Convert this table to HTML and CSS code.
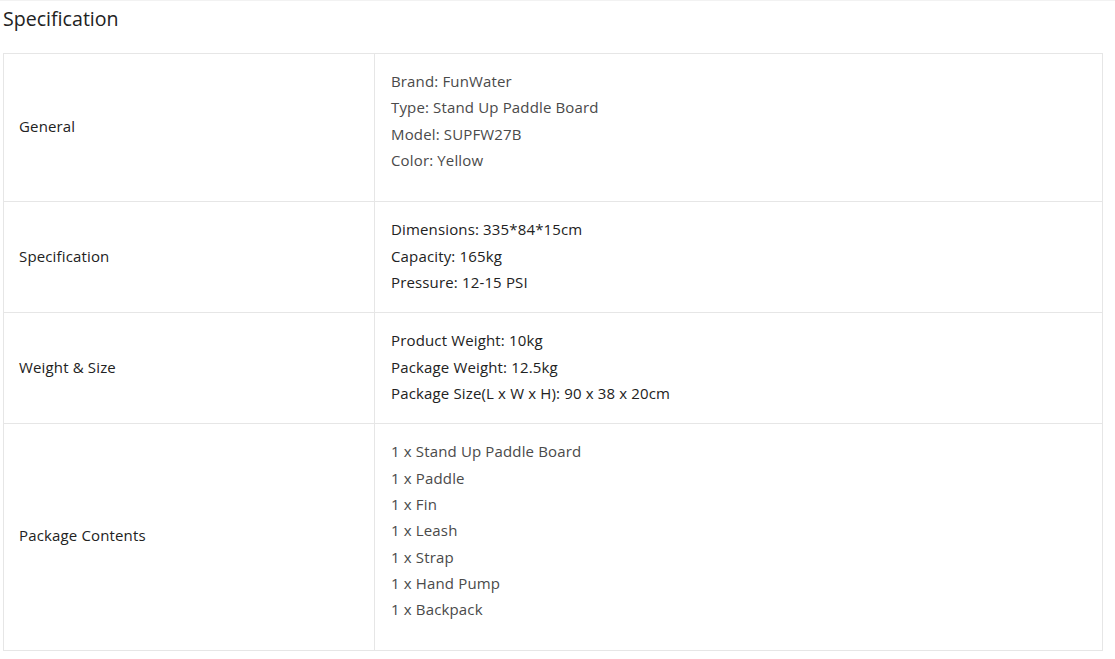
FILE: index.html
```html
<!DOCTYPE html>
<html>
<head>
<meta charset="utf-8">
<link rel="stylesheet" href="styles.css">
</head>
<body>
<h2 class="title">Specification</h2>
<table class="spec">
  <tr>
    <td class="label">General</td>
    <td class="value loose muted">Brand: FunWater<br>Type: Stand Up Paddle Board<br>Model: SUPFW27B<br>Color: Yellow</td>
  </tr>
  <tr>
    <td class="label">Specification</td>
    <td class="value">Dimensions: 335*84*15cm<br>Capacity: 165kg<br>Pressure: 12-15 PSI</td>
  </tr>
  <tr>
    <td class="label">Weight &amp; Size</td>
    <td class="value">Product Weight: 10kg<br>Package Weight: 12.5kg<br>Package Size(L x W x H): 90 x 38 x 20cm</td>
  </tr>
  <tr>
    <td class="label">Package Contents</td>
    <td class="value loose last muted">1 x Stand Up Paddle Board<br>1 x Paddle<br>1 x Fin<br>1 x Leash<br>1 x Strap<br>1 x Hand Pump<br>1 x Backpack</td>
  </tr>
</table>
</body>
</html>
```
FILE: styles.css
```css
html, body {
  margin: 0;
  padding: 0;
  background: #fff;
}
body {
  border-top: 1px solid #f2f2f2;
  padding: 0 3px;
  font-family: "Open Sans", "Liberation Sans", sans-serif;
  color: #333;
}
.title {
  margin: 0 0 17px 0;
  font-size: 19.6px;
  font-weight: 400;
  line-height: 35px;
  color: #222;
}
.spec {
  width: 1100px;
  border-collapse: collapse;
  font-size: 15px;
  letter-spacing: 0.15px;
  line-height: 26.33px;
}
.spec td {
  border: 1px solid #e6e6e6;
  padding: 14px 16px 17px 16px;
  vertical-align: middle;
}
.spec .label {
  width: 339px;
  padding-left: 15px;
  color: #222;
}
.spec .value {
  color: #222;
}
.spec .muted {
  color: #4a4a4a;
}
.spec .loose {
  padding-bottom: 28px;
}
.spec .last {
  padding-bottom: 27px;
}
```
